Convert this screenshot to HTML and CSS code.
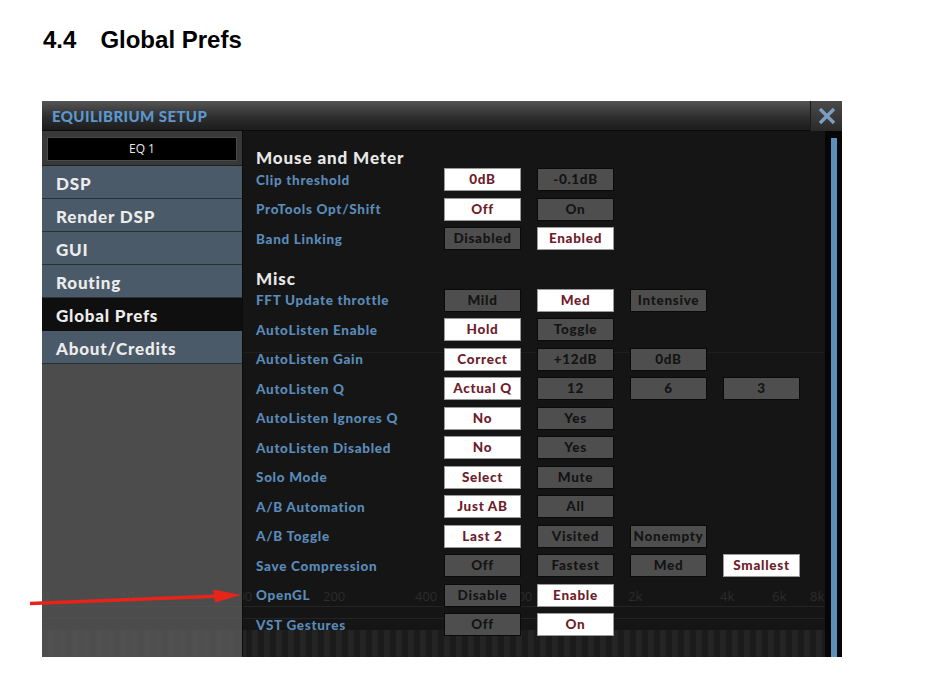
FILE: index.html
```html
<!DOCTYPE html>
<html>
<head>
<meta charset="utf-8">
<link rel="stylesheet" href="styles.css">
</head>
<body>
<h1 class="doc-title"><span class="num">4.4</span>Global Prefs</h1>

<div class="panel">
  <div class="titlebar">
    <div class="app-title">EQUILIBRIUM SETUP</div>
    <div class="close">
      <svg width="18" height="18" viewBox="0 0 18 18"><path d="M2 2 L16 16 M16 2 L2 16" stroke="#7c9fbf" stroke-width="3.4" stroke-linecap="butt"/></svg>
    </div>
  </div>
  <div class="main">
    <div class="graph">
      <div class="gline gl1"></div>
      <span class="gl" style="left:0px">0</span>
      <span class="gl" style="left:78px">10</span>
      <span class="gl" style="left:188px">100</span>
      <span class="gl" style="left:281px">200</span>
      <span class="gl" style="left:373px">400</span>
      <span class="gl" style="left:468px">800</span>
      <span class="gl" style="left:586px">2k</span>
      <span class="gl" style="left:678px">4k</span>
      <span class="gl" style="left:730px">6k</span>
      <span class="gl" style="left:768px">8k</span>
      <div class="gline gl2"></div>
      <div class="gline gl3"></div>
      <div class="stripes"></div>
    </div>
    <div class="sidebar">
      <div class="preset-wrap"><div class="preset">EQ 1</div></div>
      <div class="nav">DSP</div>
      <div class="nav">Render DSP</div>
      <div class="nav">GUI</div>
      <div class="nav">Routing</div>
      <div class="nav active">Global Prefs</div>
      <div class="nav">About/Credits</div>
      <div class="fill"></div>
    </div>
    <div class="content">
      <div class="sec-head first">Mouse and Meter</div>
      <div class="row"><div class="label">Clip threshold</div><div class="btn on">0dB</div><div class="btn">-0.1dB</div></div>
      <div class="row"><div class="label">ProTools Opt/Shift</div><div class="btn on">Off</div><div class="btn">On</div></div>
      <div class="row"><div class="label">Band Linking</div><div class="btn">Disabled</div><div class="btn on">Enabled</div></div>
      <div class="sec-head">Misc</div>
      <div class="row"><div class="label">FFT Update throttle</div><div class="btn">Mild</div><div class="btn on">Med</div><div class="btn">Intensive</div></div>
      <div class="row"><div class="label">AutoListen Enable</div><div class="btn on">Hold</div><div class="btn">Toggle</div></div>
      <div class="row"><div class="label">AutoListen Gain</div><div class="btn on">Correct</div><div class="btn">+12dB</div><div class="btn">0dB</div></div>
      <div class="row"><div class="label">AutoListen Q</div><div class="btn on">Actual Q</div><div class="btn">12</div><div class="btn">6</div><div class="btn">3</div></div>
      <div class="row"><div class="label">AutoListen Ignores Q</div><div class="btn on">No</div><div class="btn">Yes</div></div>
      <div class="row"><div class="label">AutoListen Disabled</div><div class="btn on">No</div><div class="btn">Yes</div></div>
      <div class="row"><div class="label">Solo Mode</div><div class="btn on">Select</div><div class="btn">Mute</div></div>
      <div class="row"><div class="label">A/B Automation</div><div class="btn on">Just AB</div><div class="btn">All</div></div>
      <div class="row"><div class="label">A/B Toggle</div><div class="btn on">Last 2</div><div class="btn">Visited</div><div class="btn">Nonempty</div></div>
      <div class="row"><div class="label">Save Compression</div><div class="btn">Off</div><div class="btn">Fastest</div><div class="btn">Med</div><div class="btn on">Smallest</div></div>
      <div class="row"><div class="label">OpenGL</div><div class="btn">Disable</div><div class="btn on">Enable</div></div>
      <div class="row"><div class="label">VST Gestures</div><div class="btn">Off</div><div class="btn on">On</div></div>
    </div>
    <div class="scroll"><div class="thumb"></div></div>
  </div>
</div>

<svg class="arrow" width="260" height="30" viewBox="0 0 260 30">
  <line x1="30" y1="14.5" x2="222" y2="7" stroke="#e8231a" stroke-width="3.6"/>
  <polygon points="213,0.5 241,6 215,13.5" fill="#e8231a"/>
</svg>
</body>
</html>
```
FILE: styles.css
```css
html, body {
  margin: 0;
  padding: 0;
  background: #ffffff;
}
body {
  position: relative;
  width: 942px;
  height: 687px;
  overflow: hidden;
  font-family: Lato, "Open Sans", sans-serif;
}
.doc-title {
  margin: 0;
  padding: 26px 0 0 43px;
  font-family: "Liberation Sans", Arial, sans-serif;
  font-weight: bold;
  font-size: 24px;
  line-height: 28px;
  color: #000;
}
.doc-title .num {
  margin-right: 24px;
}
.panel {
  margin: 47px 0 0 42px;
  width: 800px;
  height: 556px;
  background: #151515;
  display: flex;
  flex-direction: column;
}
.titlebar {
  height: 30px;
  display: flex;
  align-items: center;
  background: linear-gradient(#555555, #2e2e2e 55%, #1c1c1c);
  border-bottom: 1px solid #0b0b0b;
  box-sizing: border-box;
}
.app-title {
  flex: 1;
  padding-left: 10px;
  font-weight: 900;
  font-size: 15px;
  color: #5c98cf;
  letter-spacing: 0.4px;
}
.close {
  width: 32px;
  height: 30px;
  display: flex;
  align-items: center;
  justify-content: center;
  border-left: 1px solid #1c1c1c;
  background: linear-gradient(#4a4a4a, #2a2a2a);
  box-sizing: border-box;
}
.main {
  position: relative;
  flex: 1;
  display: flex;
  min-height: 0;
}
.graph {
  position: absolute;
  left: 0;
  top: 0;
  right: 17px;
  bottom: 0;
  z-index: 0;
}
.gl {
  position: absolute;
  top: 456px;
  font-family: "Open Sans", sans-serif;
  font-size: 13px;
  line-height: 18px;
  color: #2c2c2c;
}
.gline {
  position: absolute;
  left: 0;
  right: 0;
  height: 1px;
  background: #242424;
}
.gl1 { top: 221px; background: #1f1f1f; }
.gl2 { top: 475px; }
.gl3 { top: 487px; }
.stripes {
  position: absolute;
  left: 0;
  right: 0;
  top: 499px;
  bottom: 0;
  background: repeating-linear-gradient(90deg, #1b1b1b 0 6px, #242424 6px 12px);
}
.sidebar {
  position: relative;
  z-index: 1;
  width: 200px;
  display: flex;
  flex-direction: column;
  border-right: 1px solid #0c0c0c;
}
.preset-wrap {
  height: 35px;
  box-sizing: border-box;
  padding: 6px 5px 0;
  background: #383838;
  border-bottom: 1px solid #202020;
}
.preset {
  height: 24px;
  box-sizing: border-box;
  background: #000;
  border: 1px solid #4a4a4a;
  color: #e8e8e8;
  font-family: "Open Sans", sans-serif;
  font-size: 12px;
  line-height: 22px;
  text-align: center;
}
.nav {
  height: 32px;
  border-bottom: 1px solid #27313b;
  background: #4b5a69;
  color: #ececec;
  font-weight: 900;
  font-size: 17px;
  line-height: 36px;
  padding-left: 14px;
  letter-spacing: 0.8px;
}
.nav.active {
  background: #0f0f0f;
  border-bottom-color: #0f0f0f;
}
.fill {
  flex: 1;
  background: rgba(92, 92, 92, 0.78);
}
.content {
  position: relative;
  z-index: 1;
  flex: 1;
  padding: 18px 0 0 13px;
}
.sec-head {
  height: 16px;
  margin-top: 16px;
  color: #e8e8e8;
  font-weight: 900;
  font-size: 17px;
  line-height: 17px;
  letter-spacing: 0.9px;
}
.sec-head.first {
  margin-top: 0;
}
.row {
  height: 29.5px;
  display: flex;
  align-items: center;
}
.label {
  width: 188px;
  color: #5a8bb9;
  font-weight: 900;
  font-size: 13.5px;
  letter-spacing: 0.7px;
}
.btn {
  width: 77px;
  height: 23px;
  box-sizing: border-box;
  margin-right: 16px;
  background: #4e4e4e;
  border: 1px solid #0a0a0a;
  color: #141414;
  font-weight: 900;
  font-size: 13.5px;
  line-height: 21px;
  text-align: center;
  letter-spacing: 0.7px;
}
.btn.on {
  background: #ffffff;
  border-color: #9a9a9a;
  color: #6e1d2b;
}
.scroll {
  position: relative;
  z-index: 1;
  width: 17px;
  background: #060606;
  padding: 7px 0 0 6px;
  box-sizing: border-box;
}
.thumb {
  width: 6px;
  height: 100%;
  background: #5d8fbd;
}
.arrow {
  position: absolute;
  left: 0;
  top: 589px;
  z-index: 10;
}
```
